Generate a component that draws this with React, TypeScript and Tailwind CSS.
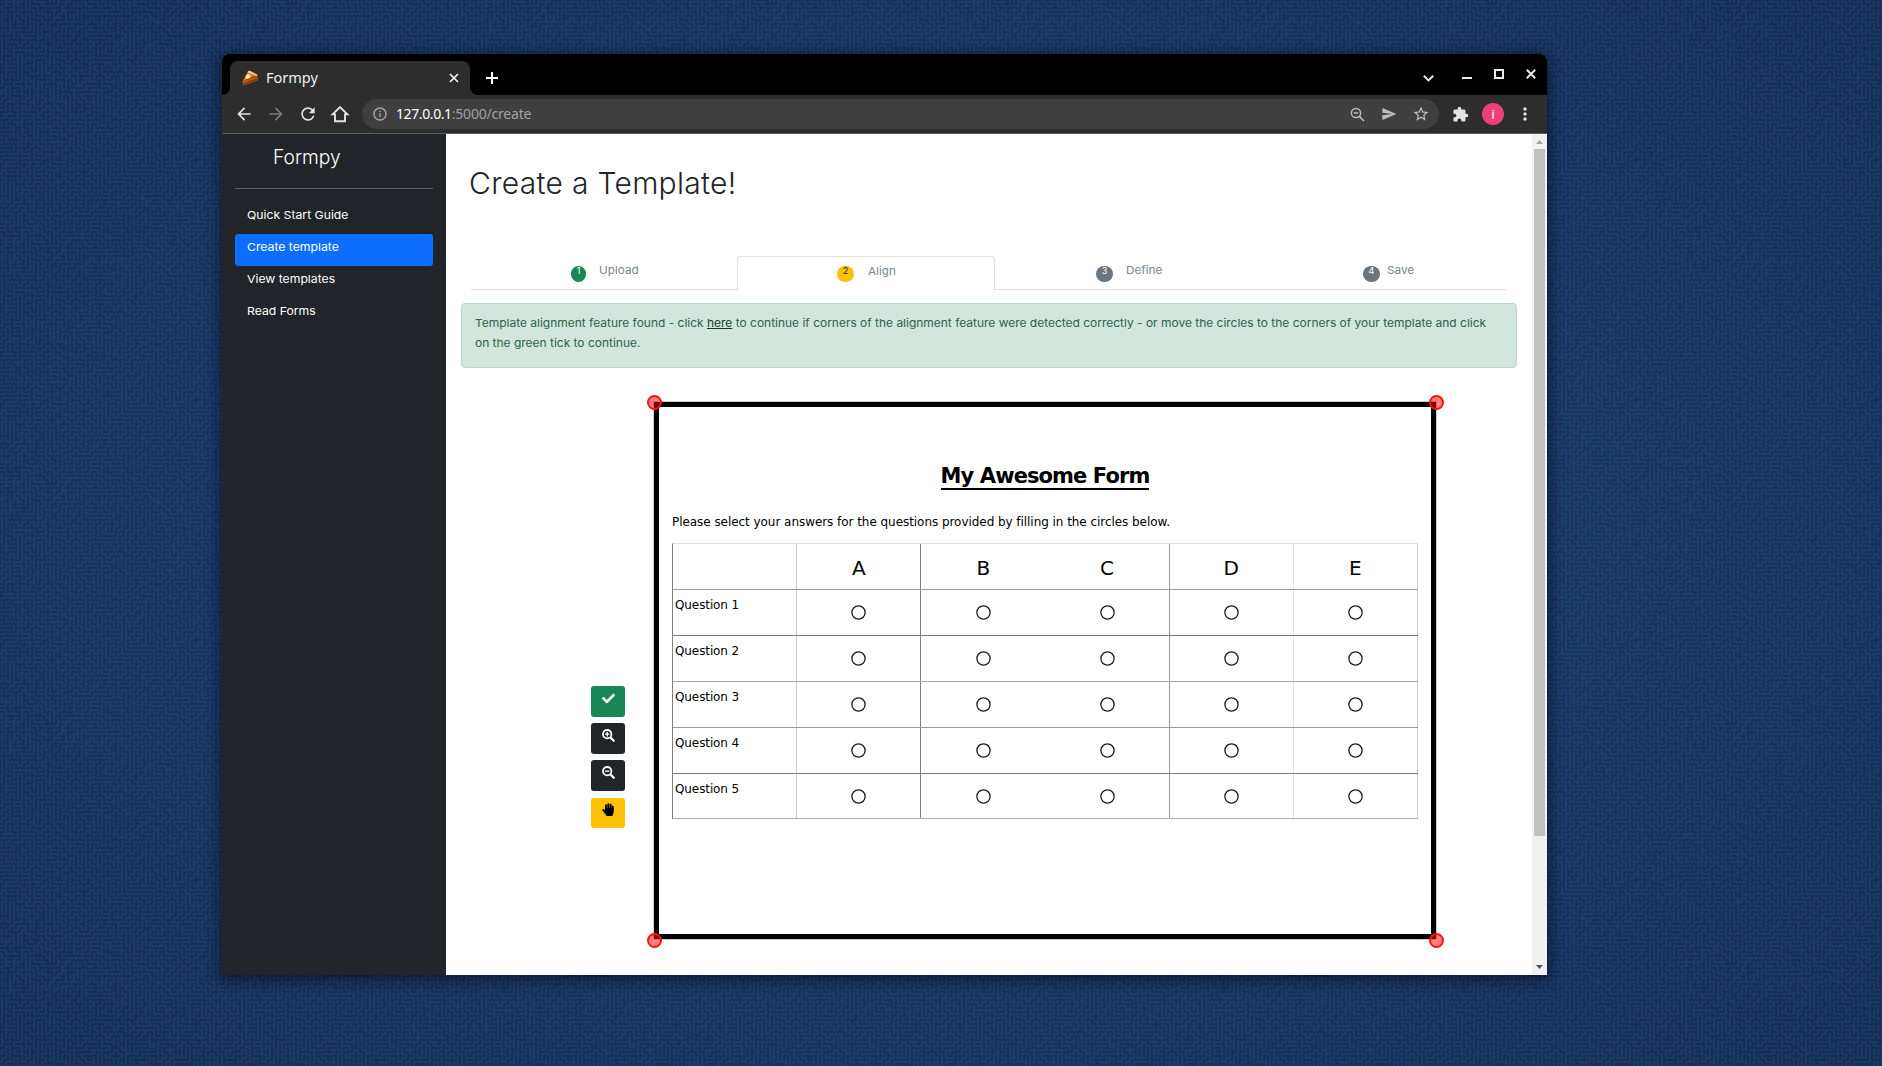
import type { ReactNode } from "react";
import { FaCheck } from "react-icons/fa";
import { MdArrowBack, MdArrowForward, MdRefresh, MdExtension, MdInfoOutline, MdMoreVert, MdSend, MdStarBorder } from "react-icons/md";

const CELLS = 60;
const PITCH = 4;
const TILE = CELLS * PITCH;

/* Seamless maze texture, grown as a depth-first spanning tree on a torus. */
function buildMaze(): string {
  let seed = 20211;
  const rand = () => {
    seed = (seed * 1103515245 + 12345) % 2147483648;
    return seed / 2147483648;
  };
  const seen = new Uint8Array(CELLS * CELLS);
  const stack: [number, number][] = [[0, 0]];
  seen[0] = 1;
  const out: string[] = [];
  const steps = [[1, 0], [-1, 0], [0, 1], [0, -1]];
  while (stack.length) {
    const at = rand() < 0.12 ? Math.floor(rand() * stack.length) : stack.length - 1;
    const [x, y] = stack[at];
    const open = steps.filter(([dx, dy]) => {
      const nx = (x + dx + CELLS) % CELLS;
      const ny = (y + dy + CELLS) % CELLS;
      return !seen[ny * CELLS + nx];
    });
    if (!open.length) {
      stack.splice(at, 1);
      continue;
    }
    const [dx, dy] = open[Math.floor(rand() * open.length)];
    const nx = (x + dx + CELLS) % CELLS;
    const ny = (y + dy + CELLS) % CELLS;
    seen[ny * CELLS + nx] = 1;
    stack.push([nx, ny]);
    const px = x * PITCH + 2;
    const py = y * PITCH + 2;
    out.push(`M${px} ${py}l${dx * PITCH} ${dy * PITCH}`);
    if (nx !== x + dx || ny !== y + dy) out.push(`M${nx * PITCH + 2} ${ny * PITCH + 2}l${-dx * PITCH} ${-dy * PITCH}`);
  }
  return out.join("");
}

const MAZE = buildMaze();

function Wallpaper() {
  return (
    <div className="absolute inset-0 -z-10 bg-[#15305b]">
      <svg className="h-full w-full" aria-hidden="true">
        <defs>
          <pattern id="maze" width={TILE} height={TILE} patternUnits="userSpaceOnUse">
            <path d={MAZE} fill="none" stroke="#203f6b" strokeWidth="1.7" strokeLinecap="square" />
          </pattern>
        </defs>
        <rect width="100%" height="100%" fill="url(#maze)" />
      </svg>
      <div className="absolute inset-0 bg-[radial-gradient(ellipse_at_center,rgba(40,80,140,0.16)_30%,rgba(14,30,66,0.16)_100%)]" />
    </div>
  );
}

function Pie() {
  return (
    <svg className="h-4 w-4" viewBox="0 0 16 16" aria-hidden="true">
      <path d="M0.6 11.2 6 1.6 Q6.6 0.6 8 1 L15.2 4.6 15.6 10.4 1 15.6Z" fill="#e07a18" />
      <path d="M0.6 11 15.2 5.4 15.4 10.6 1 15.4Z" fill="#8c3d0c" />
      <path d="M0.9 11.5 15.2 6.6 15.2 8 1 13.3Z" fill="#c75a10" />
      <path d="M6 1.4 Q6.8 0.3 8.4 1 L15.4 4.8 15 6 5.6 2.6Z" fill="#f0c987" />
      <path d="M3.6 6.6 Q4.6 3.8 7 4.4 Q9.2 5.2 8 7.8 Q5.4 9.4 3.6 8.4Z" fill="#fbe9d0" />
    </svg>
  );
}

function TitleBar() {
  return (
    <div className="flex h-[41px] bg-black">
      <div className="flex h-full w-2 items-end bg-[#2d2d2d]">
        <div className="h-full w-full rounded-br-lg bg-black" />
      </div>
      <div className="mt-[7px] flex h-[34px] w-[240px] items-center rounded-t-lg bg-[#2d2d2d] pr-[11px] pl-3">
        <Pie />
        <span className="ml-2 flex-1 pb-[2px] font-['Noto_Sans'] text-[14.5px] leading-none text-[#f1f1f1]">Formpy</span>
        <svg className="h-[10px] w-[10px]" viewBox="0 0 10 10" stroke="#f1f1f1" strokeWidth="1.7">
          <path d="M1 1l8 8M9 1l-8 8" />
        </svg>
      </div>
      <div className="flex h-full w-2 bg-[#2d2d2d]">
        <div className="h-full w-full rounded-bl-lg bg-black" />
      </div>
      <svg className="mt-[18px] ml-2 h-3 w-3" viewBox="0 0 12 12" stroke="#fff" strokeWidth="2">
        <path d="M6 0v12M0 6h12" />
      </svg>
      <div className="mr-[11px] ml-auto flex h-full text-[#e8eaed]">
        <svg className="mt-[21px] h-[7px] w-[11px]" viewBox="0 0 11 7" fill="none" stroke="currentColor" strokeWidth="2">
          <path d="M0.8 0.8l4.7 4.6 4.7-4.6" />
        </svg>
        <div className="mt-[23px] ml-7 h-[2px] w-[10px] bg-[#e8eaed]" />
        <div className="mt-[15px] ml-[22px] h-[10px] w-[10px] border-2 border-[#e8eaed]" />
        <svg className="mt-[15px] ml-[22px] h-[10px] w-[10px]" viewBox="0 0 10 10" stroke="currentColor" strokeWidth="2">
          <path d="M0.8 0.8l8.4 8.4M9.2 0.8l-8.4 8.4" />
        </svg>
      </div>
    </div>
  );
}

function Toolbar() {
  return (
    <div className="flex h-[39px] items-center border-b border-[#5a5a5a] bg-[#2d2d2d] text-[#e3e3e3]">
      <MdArrowBack className="ml-3 h-5 w-5" />
      <MdArrowForward className="ml-3 h-5 w-5 text-[#7c7c7c]" />
      <MdRefresh className="ml-3 h-5 w-5" />
      <svg className="ml-3 h-5 w-5" viewBox="0 0 20 20" fill="none" stroke="currentColor" strokeWidth="1.9">
        <path d="M2.6 10.4H5v6.9h10v-6.9h2.4L10 3z" />
      </svg>
      <div className="ml-3 flex h-[30px] w-[1077px] items-center rounded-full bg-[#3f3f3f] pr-[9px] pl-[10px] text-[#bdbdbd]">
        <MdInfoOutline className="h-4 w-4 text-[#a8a8a8]" />
        <span className="ml-2 flex-1 font-['Noto_Sans'] text-[14px] leading-none tracking-[-0.2px] text-[#a2a2a2]">
          <span className="tracking-[-0.4px] text-white">127.0.0.1</span>:5000/create
        </span>
        <svg className="mr-4 h-[15px] w-[15px]" viewBox="0 0 15 15" fill="none" stroke="currentColor" strokeWidth="1.5">
          <circle cx="6" cy="6" r="4.6" />
          <path d="M3.8 6h4.4M9.4 9.4l4.6 4.6" />
        </svg>
        <MdSend className="mr-[15px] h-4 w-4" />
        <MdStarBorder className="h-[18px] w-[18px]" />
      </div>
      <MdExtension className="ml-[13px] h-[17px] w-[17px]" />
      <div className="ml-[13px] flex h-[22px] w-[22px] items-center justify-center rounded-full bg-[#ec407a] font-['Roboto'] text-[13px] leading-none text-white">
        i
      </div>
      <MdMoreVert className="ml-[11px] h-5 w-5" />
    </div>
  );
}

const NAV = [
  { label: "Quick Start Guide", active: false },
  { label: "Create template", active: true },
  { label: "View templates", active: false },
  { label: "Read Forms", active: false },
];

function Sidebar() {
  return (
    <aside className="w-[224px] shrink-0 bg-[#212529] px-[13px] text-white">
      <div className="flex h-[55px] items-start border-b border-[#5c5f63] pt-[11px] pl-[38px] text-[20px] leading-6 font-light">
        <span className="inline-block origin-left scale-x-[0.96]">Formpy</span>
      </div>
      <nav className="mt-[13px]">
        {NAV.map((n) => (
          <div
            key={n.label}
            className={
              n.active
                ? "h-8 rounded-[3px] bg-[#0d6efd] pt-[5px] pl-3 text-[11px] leading-4"
                : "h-8 rounded-[3px] pt-[5px] pl-3 text-[11px] leading-4"
            }
          >
            <span className="inline-block origin-left scale-x-[1.11] whitespace-nowrap">{n.label}</span>
          </div>
        ))}
      </nav>
    </aside>
  );
}

function Step({ n, label, badge, className }: { n: string; label: string; badge: string; className: string }) {
  return (
    <div className={`flex h-[34px] items-start text-[11px] leading-4 text-[#7b8690] ${className}`}>
      <span className={`flex h-4 justify-center rounded-full text-[9px] leading-[10px] ${badge}`}>{n}</span>
      <span className="mt-[6px] inline-block origin-left scale-x-[1.07]">{label}</span>
    </div>
  );
}

function Steps() {
  return (
    <div className="flex w-[1036px]">
      <Step n="1" label="Upload" badge="mt-[10px] w-[15px] mr-[13px] bg-[#198754] text-white" className="w-[266px] border-b border-[#dee2e6] pl-[100px]" />
      <Step n="2" label="Align" badge="mt-[9px] w-[17px] mr-[14px] bg-[#ffc107] text-[#212529]" className="w-[258px] rounded-t-[4px] border-x border-t border-[#dee2e6] pl-[99px]" />
      <Step n="3" label="Define" badge="mt-[10px] w-[17px] mr-[13px] bg-[#6c757d] text-white" className="w-[257px] border-b border-[#dee2e6] pl-[101px]" />
      <Step n="4" label="Save" badge="mt-[10px] w-[17px] mr-[7px] bg-[#6c757d] text-white" className="w-[255px] border-b border-[#dee2e6] pl-[111px]" />
    </div>
  );
}

function Alert() {
  return (
    <div className="mt-[13px] -ml-[10px] h-[65px] w-[1056px] rounded-[4px] border border-[#badbcc] bg-[#d1e7dd] pt-[9px] pl-[13px] text-[11px] leading-5 text-[#2b634a]">
      <div className="origin-left scale-x-[1.088] whitespace-nowrap">
        Template alignment feature found - click <a className="text-[#0c4128] underline">here</a> to continue if corners of the alignment feature
        were detected correctly - or move the circles to the corners of your template and click
        <br />
        on the green tick to continue.
      </div>
    </div>
  );
}

function Magnifier({ plus }: { plus?: boolean }) {
  return (
    <svg className="h-[13px] w-[13px]" viewBox="0 0 13 13" fill="none" stroke="#fff">
      <circle cx="5.2" cy="5.2" r="4.2" strokeWidth="1.8" />
      <path d="M8.4 8.4l4 4" strokeWidth="2.2" />
      <path d={plus ? "M5.2 3v4.4M3 5.2h4.4" : "M3 5.2h4.4"} strokeWidth="1.3" />
    </svg>
  );
}

function Hand() {
  return (
    <svg className="h-[13px] w-[12px]" viewBox="0 0 12 13" fill="none" stroke="#000" strokeLinecap="round" strokeWidth="1.9">
      <path d="M4 6V2.2M6.3 6V1.2M8.6 6V1.8M10.7 7V3.6M1.2 6.9l2.4 3" />
      <path d="M3.1 5h8.5v4.2L10.4 13H4.6L2.6 9.8z" fill="#000" stroke="none" />
    </svg>
  );
}

function ToolButton({ className, children }: { className: string; children: ReactNode }) {
  return <button className={`flex w-[34px] items-start justify-center rounded-[3px] ${className}`}>{children}</button>;
}

function Tools() {
  return (
    <div className="mt-[284px] flex flex-col">
      <ToolButton className="h-[31px] bg-[#198754] pt-[6px] text-[13px] text-white">
        <FaCheck />
      </ToolButton>
      <ToolButton className="mt-[6px] h-[31px] bg-[#212529] pt-[6px]">
        <Magnifier plus />
      </ToolButton>
      <ToolButton className="mt-[6px] h-[31px] bg-[#212529] pt-[6px]">
        <Magnifier />
      </ToolButton>
      <ToolButton className="mt-[7px] h-[30px] bg-[#ffc107] pt-[5px]">
        <Hand />
      </ToolButton>
    </div>
  );
}

const COLUMNS = [
  { label: "A", edge: "border-r border-r-[#808080]" },
  { label: "B", edge: "" },
  { label: "C", edge: "border-r border-r-[#999999]" },
  { label: "D", edge: "border-r border-r-[#e4e4e4]" },
  { label: "E", edge: "border-r border-r-[#cfcfcf]" },
];

const ROWS = [
  { label: "Question 1", line: "h-[46px] border-b-[#7c7c7c]" },
  { label: "Question 2", line: "h-[46px] border-b-[#a6a6a6]" },
  { label: "Question 3", line: "h-[46px] border-b-[#999999]" },
  { label: "Question 4", line: "h-[46px] border-b-[#808080]" },
  { label: "Question 5", line: "h-[45px] border-b-[#b0b0b0]" },
];

function AnswerTable() {
  return (
    <div className="mt-[13px] ml-[13px] w-[746px] border-t border-l border-t-[#e0e0e0] border-l-[#808080]">
      <div className="grid h-[46px] grid-cols-6 border-b border-b-[#9c9c9c]">
        <div className="border-r border-r-[#cccccc]" />
        {COLUMNS.map((c) => (
          <div key={c.label} className={`flex items-center justify-center pt-[2px] text-[20px] leading-none ${c.edge}`}>
            {c.label}
          </div>
        ))}
      </div>
      {ROWS.map((r) => (
        <div key={r.label} className={`grid grid-cols-6 border-b ${r.line}`}>
          <div className="border-r border-r-[#cccccc] pt-[7px] pl-[2px] text-[12px] leading-4 tracking-[-0.1px]">{r.label}</div>
          {COLUMNS.map((c) => (
            <div key={c.label} className={`flex items-center justify-center ${c.edge}`}>
              <svg className="h-[15px] w-[15px]" viewBox="0 0 15 15">
                <circle cx="7.5" cy="7.5" r="6.6" fill="none" stroke="#1c1c1c" strokeWidth="1.3" />
              </svg>
            </div>
          ))}
        </div>
      ))}
    </div>
  );
}

function Handle({ className }: { className: string }) {
  return <span className={`absolute h-[15px] w-[15px] rounded-full border-2 border-[#ff1010] bg-[#ff0000]/50 ${className}`} />;
}

function FormSheet() {
  return (
    <div className="relative ml-[29px] h-[537px] w-[782px] border-[5px] border-black font-['DejaVu_Sans'] text-black shadow-[0_0_0_0.5px_#999]">
      <Handle className="-top-[12px] -left-[12px]" />
      <Handle className="-top-[12px] -right-[13px]" />
      <Handle className="-bottom-[14px] -left-[12px]" />
      <Handle className="-right-[13px] -bottom-[14px]" />
      <h2 className="mt-[57px] flex justify-center text-[21px] leading-6 font-bold">
        <span className="border-b-2 border-black tracking-[-0.9px]">My Awesome Form</span>
      </h2>
      <p className="mt-6 ml-[13px] text-[12px] leading-4 tracking-[-0.05px] whitespace-nowrap">
        Please select your answers for the questions provided by filling in the circles below.
      </p>
      <AnswerTable />
    </div>
  );
}

function ScrollBar() {
  return (
    <div className="flex w-[15px] shrink-0 flex-col items-center bg-[#f1f1f1]">
      <svg className="mt-[6px] h-1 w-[7px]" viewBox="0 0 7 4" fill="#a3a3a3">
        <path d="M0 4L3.5 0 7 4z" />
      </svg>
      <div className="mt-[5px] h-[687px] w-[11px] bg-[#c1c1c1]" />
      <svg className="mt-auto mb-[6px] h-1 w-[7px]" viewBox="0 0 7 4" fill="#505050">
        <path d="M0 0L3.5 4 7 0z" />
      </svg>
    </div>
  );
}

export default function App() {
  return (
    <div className="relative isolate h-[1066px] w-[1882px] overflow-hidden pt-[54px] pl-[222px] font-['Inter',sans-serif]">
      <Wallpaper />
      <div className="flex h-[921px] w-[1325px] flex-col overflow-hidden rounded-t-lg shadow-[0_3px_14px_2px_rgba(0,0,0,0.5)]">
        <TitleBar />
        <Toolbar />
        <div className="flex min-h-0 flex-1">
          <Sidebar />
          <main className="min-w-0 flex-1 overflow-hidden bg-white pl-[25px]">
            <h1 className="mt-[29px] -ml-[2px] text-[30px] leading-10 font-[340] tracking-[0.3px] text-[#212529]">Create a Template!</h1>
            <div className="mt-[53px]">
              <Steps />
            </div>
            <Alert />
            <div className="mt-[34px] ml-[120px] flex items-start">
              <Tools />
              <FormSheet />
            </div>
          </main>
          <ScrollBar />
        </div>
      </div>
    </div>
  );
}
